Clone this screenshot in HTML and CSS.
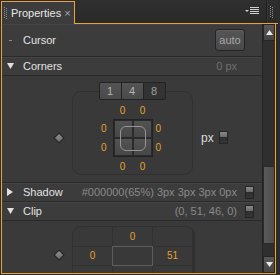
FILE: index.html
```html
<!DOCTYPE html>
<html lang="en">
<head>
    <meta charset="UTF-8">
    <title>Properties</title>
    <link rel="stylesheet" href="styles.css">
</head>
<body>

<!-- tab strip -->
<div class="tabbar">
    <div class="tab">
        <span class="grip"></span>
        <span class="tab-title">Properties</span>
        <span class="tab-close">×</span>
    </div>
    <div class="tabbar-fill">
        <svg class="panel-menu" width="14" height="8" viewBox="0 0 14 8">
            <polygon points="0,3 4,3 2,5" fill="#d0d0d0"/>
            <rect x="5" y="0" width="9" height="1" fill="#d0d0d0"/>
            <rect x="5" y="2" width="9" height="1" fill="#d0d0d0"/>
            <rect x="5" y="4" width="9" height="1" fill="#d0d0d0"/>
            <rect x="5" y="6" width="9" height="1" fill="#d0d0d0"/>
        </svg>
        <span class="tabbar-sep"></span>
        <span class="grip grip-right"></span>
    </div>
</div>

<div class="panel">
    <div class="panel-content">

        <!-- Cursor -->
        <div class="row cursor-row">
            <span class="row-icon"><span class="dash"></span></span>
            <span class="row-label">Cursor</span>
            <span class="auto-btn">auto</span>
        </div>

        <!-- Corners -->
        <div class="row header-row">
            <span class="row-icon">
                <svg width="7" height="6" viewBox="0 0 7 6"><polygon points="0,0 7,0 3.5,6" fill="#e0e0e0"/></svg>
            </span>
            <span class="row-label">Corners</span>
            <span class="row-value dim no-toggle">0 px</span>
        </div>
        <div class="corners-body">
            <span class="keyframe"></span>
            <div class="corner-editor">
                <div class="count-buttons">
                    <span class="count-btn">1</span>
                    <span class="count-btn">4</span>
                    <span class="count-btn selected">8</span>
                </div>
                <div class="corner-box">
                    <div class="corner-grid">
                        <span class="num top c2">0</span>
                        <span class="num top c3">0</span>
                        <span class="num left r2">0</span>
                        <span class="num left r3">0</span>
                        <div class="corner-cells">
                            <span class="cell"></span>
                            <span class="cell"></span>
                            <span class="cell"></span>
                            <span class="cell"></span>
                            <span class="corner-shape"></span>
                        </div>
                        <span class="num right r2">0</span>
                        <span class="num right r3">0</span>
                        <span class="num bottom c2">0</span>
                        <span class="num bottom c3">0</span>
                    </div>
                </div>
            </div>
            <div class="unit-group">
                <span class="unit-label">px</span>
                <span class="toggle"></span>
            </div>
        </div>

        <!-- Shadow -->
        <div class="row header-row">
            <span class="row-icon">
                <svg width="7" height="8" viewBox="0 0 7 8"><polygon points="0,0 6,4 0,8" fill="#e0e0e0"/></svg>
            </span>
            <span class="row-label">Shadow</span>
            <span class="row-value">#000000(65%) 3px 3px 3px 0px</span>
            <span class="toggle"></span>
        </div>

        <!-- Clip -->
        <div class="row header-row">
            <span class="row-icon">
                <svg width="7" height="6" viewBox="0 0 7 6"><polygon points="0,0 7,0 3.5,6" fill="#e0e0e0"/></svg>
            </span>
            <span class="row-label">Clip</span>
            <span class="row-value">(0, 51, 46, 0)</span>
            <span class="toggle"></span>
        </div>
        <div class="clip-body">
            <span class="keyframe"></span>
            <div class="clip-box">
                <span class="clip-cell"></span>
                <span class="clip-cell num">0</span>
                <span class="clip-cell"></span>
                <span class="clip-cell num">0</span>
                <span class="clip-cell middle"></span>
                <span class="clip-cell num">51</span>
                <span class="clip-cell"></span>
                <span class="clip-cell"></span>
                <span class="clip-cell"></span>
            </div>
        </div>
    </div>

    <!-- scrollbar -->
    <div class="scrollbar">
        <span class="sb-btn">
            <svg width="7" height="5" viewBox="0 0 7 5"><polygon points="0,5 7,5 3.5,0" fill="#e8e8e8"/></svg>
        </span>
        <span class="sb-track grow"></span>
        <span class="sb-thumb"></span>
        <span class="sb-track"></span>
        <span class="sb-btn">
            <svg width="7" height="5" viewBox="0 0 7 5"><polygon points="0,0 7,0 3.5,5" fill="#e8e8e8"/></svg>
        </span>
    </div>
</div>

</body>
</html>
```

FILE: styles.css
```css
:root {
    --orange: #eba236;
    --panel-bg: #3c3c3c;
    --body-bg: #3a3a3a;
    --line-dark: #2a2a2a;
    --text: #e2e2e2;
    --text-dim: #8a8a8a;
    --num: #e8a02c;
}

body {
    margin: 0;
    width: 280px;
    height: 275px;
    background-color: #2b2b2b;
    font-family: 'Liberation Sans', Arial, sans-serif;
    font-size: 11px;
    color: var(--text);
    overflow: hidden;
}

/* tab strip */
.tabbar {
    display: flex;
    height: 24px;
    padding-right: 2px;
}

.tab {
    display: flex;
    align-items: center;
    width: 72px;
    height: 22px;
    margin: 1px 0 0 1px;
    border: 1px solid var(--orange);
    border-bottom: none;
    background-color: var(--panel-bg);
}

.grip {
    flex-shrink: 0;
    width: 4px;
    height: 12px;
    margin-left: 2px;
    background-image:
        repeating-linear-gradient(#909090 0 1px, transparent 1px 2px),
        repeating-linear-gradient(#909090 0 1px, transparent 1px 2px);
    background-size: 1px 100%;
    background-position: 0 0, 2px 1px;
    background-repeat: no-repeat;
}

.tab-title {
    margin-left: 3px;
    font-size: 11px;
    color: #e8e8e8;
    white-space: nowrap;
}

.tab-close {
    margin-left: 3px;
    font-size: 11px;
    color: #a8a8a8;
}

.tabbar-fill {
    flex: 1;
    display: flex;
    align-items: center;
    justify-content: flex-end;
    border-bottom: 1px solid var(--orange);
    background: linear-gradient(#2f2f2f, #2a2a2a);
}

.panel-menu {
    margin-right: 7px;
    margin-top: -1px;
}

.tabbar-sep {
    align-self: stretch;
    width: 1px;
    background-color: #1f1f1f;
    box-shadow: 1px 0 0 #383838;
}

.grip-right {
    margin: 0 4px 0 3px;
}

/* panel */
.panel {
    display: flex;
    width: 275px;
    height: 250px;
    margin-left: 1px;
    border: 1px solid var(--orange);
    border-top: none;
    box-sizing: border-box;
}

.panel-content {
    flex: 1;
    overflow: hidden;
    background-color: var(--panel-bg);
}

.row {
    display: flex;
    align-items: center;
    padding: 0 8px 0 5px;
    border-bottom: 1px solid var(--line-dark);
    box-shadow: inset 0 1px 0 #454545;
    background-color: var(--panel-bg);
}

.cursor-row {
    height: 32px;
    padding-right: 17px;
}

.header-row {
    height: 18px;
}

.row-icon {
    display: flex;
    align-items: center;
    justify-content: center;
    width: 7px;
}

.dash {
    width: 3px;
    height: 1px;
    background-color: #8a8a8a;
}

.row-label {
    margin-left: 9px;
    color: var(--text);
}

.row-value {
    margin-left: auto;
    color: var(--text-dim);
}

.row-value.dim {
    color: #6e6e6e;
}

.row-value.no-toggle {
    margin-right: 17px;
}

.toggle {
    width: 7px;
    height: 11px;
    margin-left: 8px;
    border: 1px solid #242424;
    background: linear-gradient(#8a8a8a 0, #6a6a6a 45%, #2e2e2e 50%, #353535 100%);
}

.auto-btn {
    margin-left: auto;
    width: 28px;
    height: 20px;
    line-height: 20px;
    text-align: center;
    border: 1px solid #232323;
    border-radius: 3px;
    background: linear-gradient(#555555, #4a4a4a);
    box-shadow: inset 0 1px 0 #5e5e5e;
    color: #a6a6a6;
    font-size: 11px;
}

/* corners */
.corners-body {
    display: flex;
    align-items: center;
    padding: 6px 0 7px 53px;
    border-bottom: 1px solid var(--line-dark);
    background-color: var(--body-bg);
}

.keyframe {
    width: 6px;
    height: 6px;
    border: 1px solid #262626;
    background: linear-gradient(135deg, #909090, #6a6a6a);
    transform: rotate(45deg);
}

.corners-body .keyframe {
    margin-top: 18px;
}

.corner-editor {
    display: flex;
    flex-direction: column;
    align-items: center;
    width: 121px;
    margin-left: 9px;
}

.count-buttons {
    position: relative;
    z-index: 1;
    display: flex;
    margin-bottom: -9px;
}

.count-btn {
    width: 21px;
    height: 16px;
    line-height: 16px;
    margin-left: -1px;
    text-align: center;
    border: 1px solid #222;
    background: linear-gradient(#545454, #4a4a4a);
    color: #b4b4b4;
    font-size: 11px;
}

.count-btn:first-child {
    border-radius: 2px 0 0 2px;
}

.count-btn.selected {
    background: #333333;
    border-radius: 0 2px 2px 0;
    color: #a0a0a0;
}

.corner-box {
    display: flex;
    justify-content: center;
    width: 121px;
    height: 84px;
    box-sizing: border-box;
    padding-top: 13px;
    border: 1px solid #303030;
    border-radius: 9px;
    background-color: #393939;
}

.corner-grid {
    display: grid;
    grid-template-columns: 14px 20px 20px 14px;
    grid-template-rows: 14px 19px 19px 16px;
}

.num {
    color: var(--num);
    font-size: 10px;
    line-height: 12px;
}

.corner-grid .num {
    text-align: center;
}

.num.top { grid-row: 1; align-self: start; }
.num.bottom { grid-row: 4; align-self: end; }
.num.c2 { grid-column: 2; }
.num.c3 { grid-column: 3; }
.num.left { grid-column: 1; text-align: right; padding-right: 6px; align-self: center; }
.num.right { grid-column: 4; text-align: left; padding-left: 3px; align-self: center; }
.num.r2 { grid-row: 2; }
.num.r3 { grid-row: 3; }

.corner-cells {
    position: relative;
    grid-column: 2 / 4;
    grid-row: 2 / 4;
    display: grid;
    grid-template-columns: 1fr 1fr;
    grid-template-rows: 1fr 1fr;
    border: 1px solid #222;
}

.cell {
    background: linear-gradient(#535353, #474747);
    box-shadow: inset 0 0 0 1px #2a2a2a;
}

.corner-shape {
    position: absolute;
    top: 6px;
    left: 6px;
    right: 6px;
    bottom: 5px;
    border: 1.5px solid #959595;
    border-radius: 6px;
}

.unit-group {
    display: flex;
    align-items: center;
    margin: 18px 0 0 8px;
}

.unit-label {
    font-size: 12px;
    color: #dcdcdc;
}

.unit-group .toggle {
    margin-left: 5px;
}

/* clip */
.clip-body {
    display: flex;
    align-items: flex-start;
    padding: 5px 0 0 53px;
    background-color: var(--body-bg);
}

.clip-body .keyframe {
    margin-top: 25px;
}

.clip-box {
    display: grid;
    grid-template-columns: 39px 39px 39px;
    grid-template-rows: 19px 18px 20px;
    gap: 1px;
    width: 121px;
    margin-left: 9px;
    border: 1px solid #303030;
    border-bottom: none;
    border-radius: 9px 9px 0 0;
    background-color: #303030;
    overflow: hidden;
}

.clip-cell {
    display: flex;
    align-items: center;
    justify-content: center;
    background-color: #393939;
}

.clip-cell.middle {
    box-shadow: 0 0 0 1px #5e5e5e;
    position: relative;
}

/* scrollbar */
.scrollbar {
    display: flex;
    flex-direction: column;
    width: 12px;
    border-left: 1px solid #242424;
}

.sb-btn {
    display: flex;
    align-items: center;
    justify-content: center;
    height: 15px;
    border: 1px solid #252525;
    background: linear-gradient(#585858, #444444);
}

.sb-track {
    height: 12px;
    background-color: #2f2f2f;
}

.sb-track.grow {
    flex: 1;
}

.sb-thumb {
    height: 76px;
    border: 1px solid #2a2a2a;
    background: linear-gradient(90deg, #5a5a5a, #4e4e4e);
}
```
